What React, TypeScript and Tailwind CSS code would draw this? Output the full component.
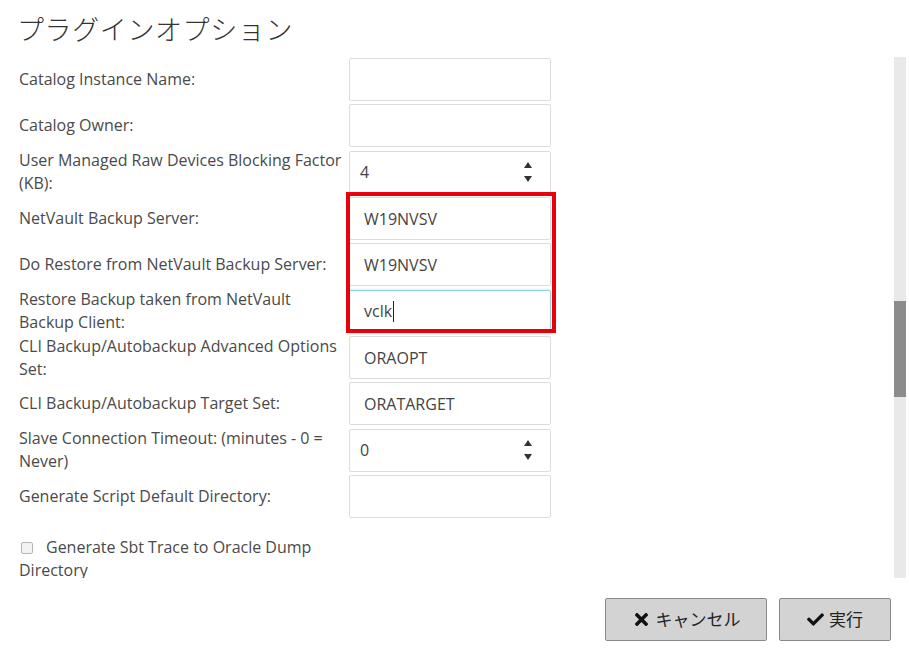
import { FaTimes, FaCheck } from 'react-icons/fa'

interface Row {
  label: string
  value?: string
  spinner?: boolean
  focused?: boolean
}

const topRows: Row[] = [
  { label: 'Catalog Instance Name:' },
  { label: 'Catalog Owner:' },
  { label: 'User Managed Raw Devices Blocking Factor (KB):', value: '4', spinner: true },
]

const markedRows: Row[] = [
  { label: 'NetVault Backup Server:', value: 'W19NVSV' },
  { label: 'Do Restore from NetVault Backup Server:', value: 'W19NVSV' },
  { label: 'Restore Backup taken from NetVault Backup Client:', value: 'vclk', focused: true },
]

const bottomRows: Row[] = [
  { label: 'CLI Backup/Autobackup Advanced Options Set:', value: 'ORAOPT' },
  { label: 'CLI Backup/Autobackup Target Set:', value: 'ORATARGET' },
  { label: 'Slave Connection Timeout: (minutes - 0 = Never)', value: '0', spinner: true },
  { label: 'Generate Script Default Directory:' },
]

function Spinner() {
  return (
    <div className="flex flex-col items-center gap-[8px] mr-[18px]">
      <svg width="8" height="6" viewBox="0 0 8 6">
        <path d="M4 0 L8 6 L0 6 Z" fill="#333" />
      </svg>
      <svg width="8" height="6" viewBox="0 0 8 6">
        <path d="M0 0 L8 0 L4 6 Z" fill="#333" />
      </svg>
    </div>
  )
}

function FormRow({ row }: { row: Row }) {
  const box = row.focused
    ? 'border-[#8fd3d8] shadow-[0_0_3px_rgba(102,200,210,0.5)]'
    : 'border-[#dcdcdc]'
  return (
    <div className="h-[46.33px] shrink-0 flex items-center pl-[19px]">
      <div className="w-[330px] pr-[2px] text-[16px] leading-[23px] text-[#4a4a4a]">{row.label}</div>
      <div
        className={`w-[202px] h-[43px] flex items-center justify-between border rounded-[2px] bg-white ${box}`}
      >
        <span
          className={`text-[16px] text-[#444] ${row.spinner ? 'pl-[10px]' : 'pl-[14px]'} flex items-center`}
        >
          {row.value}
          {row.focused && <span className="inline-block w-[1px] h-[21px] bg-[#222] ml-[1px]" />}
        </span>
        {row.spinner && <Spinner />}
      </div>
    </div>
  )
}

export default function App() {
  return (
    <div
      className="w-[909px] h-[655px] bg-white overflow-hidden flex flex-col"
      style={{ fontFamily: '"Open Sans", "Noto Sans CJK JP", sans-serif' }}
    >
      <h1
        className="pl-[17px] pt-[11px] h-[57px] shrink-0 text-[27px] leading-[36px] font-light text-[#333] tracking-[0.6px]"
        style={{ fontFamily: '"Noto Sans CJK JP", "Open Sans", sans-serif' }}
      >
        プラグインオプション
      </h1>

      <div className="flex h-[521px] shrink-0 overflow-hidden">
        <div className="flex-1 flex flex-col mt-[-0.5px]">
          {topRows.map((r) => (
            <FormRow key={r.label} row={r} />
          ))}
          <div className="relative flex flex-col shrink-0">
            {markedRows.map((r) => (
              <FormRow key={r.label} row={r} />
            ))}
            <span className="absolute left-[346px] top-[-3px] w-[210px] h-[141px] border-4 border-[#e8000b] pointer-events-none" />
          </div>
          {bottomRows.map((r) => (
            <FormRow key={r.label} row={r} />
          ))}

          <div className="pl-[19px] pt-[16px] w-[349px] shrink-0 text-[16px] leading-[23px] text-[#4a4a4a]">
            <span className="inline-block w-[12px] h-[12px] border border-[#b5b5b5] rounded-[2px] bg-[#f3f3f3] mr-[13px] ml-[2px] align-[-1px]" />
            Generate Sbt Trace to Oracle Dump Directory
          </div>
        </div>

        <div className="w-[12px] mr-[3px] bg-[#e9e9e9] flex flex-col">
          <div className="h-[244px]" />
          <div className="h-[96px] bg-[#8c8c8c]" />
        </div>
      </div>

      <div className="flex justify-end gap-[12px] pr-[18px] pt-[20px]">
        <button className="w-[162px] h-[43px] flex items-center justify-center gap-[5px] bg-[#d3d3d3] border border-[#8a8a8a] rounded-[2px] text-[17px] text-[#222]">
          <FaTimes size={19} color="#111" />
          キャンセル
        </button>
        <button className="w-[112px] h-[43px] flex items-center justify-center gap-[5px] bg-[#d3d3d3] border border-[#8a8a8a] rounded-[2px] text-[17px] text-[#222]">
          <FaCheck size={17} color="#111" />
          実行
        </button>
      </div>
    </div>
  )
}
